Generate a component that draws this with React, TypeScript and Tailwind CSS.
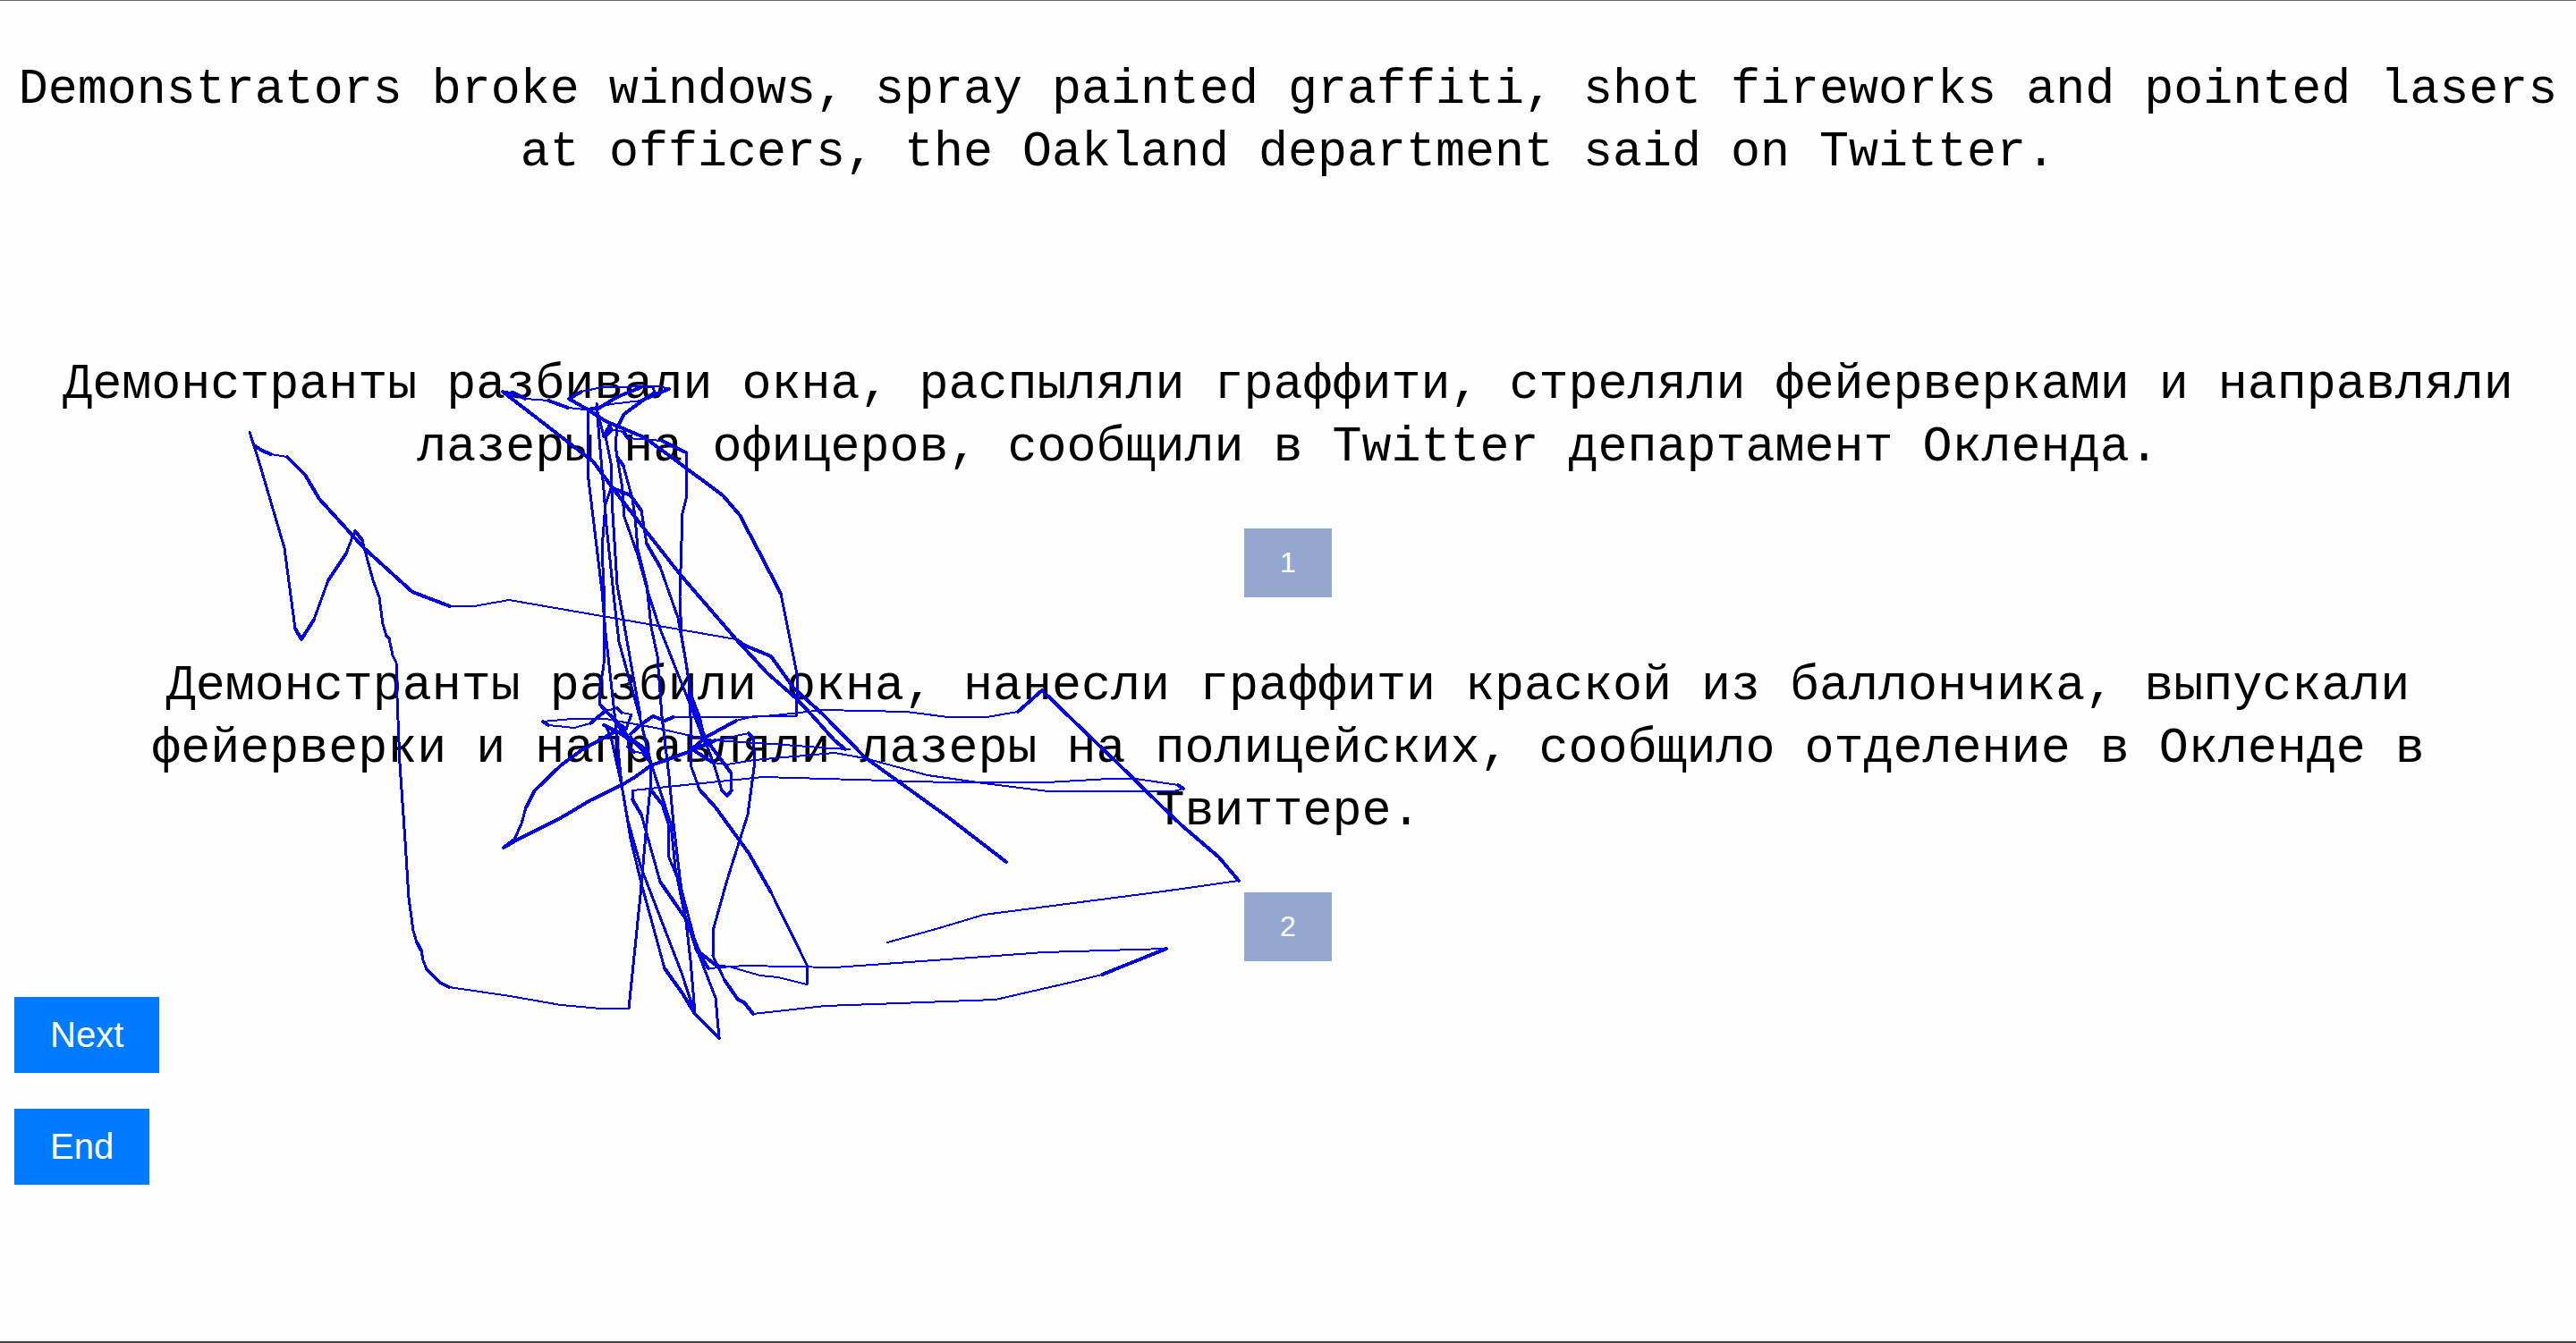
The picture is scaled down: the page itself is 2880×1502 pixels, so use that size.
const strokes: string[] = [
  // left loop and long diagonal
  "279,482 284,497 293,503 303,507 321,510 341,530 357,557 387,590 407,612 461,661 503,677 530,677 569,670 823,714 833,721 862,733 887,768 920,798 967,846 1003,872 1060,913 1125,963",
  "279,482 288,510 318,612 330,702 337,714 351,692 367,648 387,618 395,597 397,593 405,603 410,622 417,648 424,667 428,697 432,710 435,713 439,732 443,740 444,780 447,853 453,940 457,1003 462,1040 466,1053 471,1062 473,1073 477,1083 492,1098 502,1103 570,1113 627,1123 672,1127 703,1127 716,1000 723,920 727,880 727,853 722,837 702,823",
  // diagonal from the upper corner and its way back
  "562,437 663,515 685,545 720,590 760,641 823,714 858,752 890,780 907,798 933,827 945,837 950,837 930,836 863,831 797,827 777,823 733,813 677,803 640,803 607,806 613,810 642,813 660,808 677,794 690,791 695,796 706,798 700,814 694,810",
  // top loops and right arc
  "562,437 574,438 587,445 613,447 635,455 653,457 683,451 717,447 748,434 737,431 673,432 650,437 636,445 657,457 677,470 720,488 753,512 808,553 827,575 848,615 873,663 891,753 891,780 890,800 843,800 823,805 790,823 772,838",
  "562,437 572,442 580,441 572,438",
  "657,457 667,457 690,443 717,432 730,432 732,438 717,448 698,462 690,477 688,497 690,510 695,540 698,577 713,620 725,663 737,700 770,783 787,827",
  "690,510 697,520 707,557 710,577 713,613 723,653 728,700 735,733 740,800 748,867 753,920 760,980 767,1030 772,1073 777,1133",
  "685,545 705,553 717,570 723,607 738,633 758,690 767,740 773,777 782,800 788,827 798,853 807,883 813,889 818,883 817,863 790,827 775,790 762,710",
  "687,480 697,482 702,489 740,492 767,505 768,553 763,573 760,667 762,710 770,760 772,800 773,857 782,882 800,902 837,953 862,997 902,1078 902,1100 870,1092 850,1090 815,1080 800,1078 783,1065 767,1027 738,985 717,910 707,893 707,883 853,868 1060,874 1170,874 1240,870 1270,870 1317,877 1323,881 1313,884 1172,884 1100,875 1037,866 967,847 933,841 843,849 813,854 797,852 777,839",
  "775,838 728,855 710,868 695,877 660,894 630,912 575,940 563,947 575,938 583,920 588,902 598,883 627,855 650,838 677,823 688,817 677,811 683,823 695,877 702,917 717,970 762,1087 777,1133",
  "705,820 717,809 730,800 743,805 753,801 840,801 867,799 920,793 1013,795 1060,801 1103,801 1138,795 1165,771 1200,805 1250,853 1297,899 1320,921 1363,958 1385,984 1300,996 1100,1022 1050,1037 992,1053",
  "775,837 800,827 837,819 842,825 844,850 836,910 813,983 797,1040 797,1068 810,1095 825,1117 832,1120 842,1133 923,1124 1113,1117 1200,1097 1232,1089 1304,1060 1167,1064 1100,1069 933,1081 883,1080 833,1079 792,1082 778,1060 767,1027",
  "657,457 657,527 673,660 677,707 687,797 695,877 705,937 717,987 743,1082 763,1110 777,1133 804,1160 800,1115 780,1063 760,987 748,958 747,920 740,898 728,883 727,853",
  "667,450 670,490 675,547 678,587 687,673 692,717 715,800 728,853 750,920 755,970 767,1030",
  "668,460 675,487 680,478 681,475 684,480 677,487 683,517 685,573 690,653 707,750 716,800",
  "683,545 677,563 673,613 676,673 675,743 670,773 671,787 680,797 690,806 702,823 722,837 728,853",
  "675,810 690,817 710,830 723,842 728,855",
  "688,806 702,826 702,834 709,840 719,841 726,850",
];

type Segment = { x1: number; y1: number; x2: number; y2: number; strokeWidth: number };

// The pen is thin on nearly level runs, broader on steep ones and broadest on diagonals.
function penWidth(dx: number, dy: number) {
  if (dy < dx / 3) return 2;
  return dy < dx * 2 ? 4 : 3;
}

const segments: Segment[] = strokes.flatMap((stroke) => {
  const points = stroke.split(" ").map((pair) => pair.split(",").map(Number));
  return points.slice(1).map(([x2, y2], i) => {
    const [x1, y1] = points[i];
    return { x1, y1, x2, y2, strokeWidth: penWidth(Math.abs(x2 - x1), Math.abs(y2 - y1)) };
  });
});

const textClass =
  "text-center font-['Liberation_Mono',monospace] text-[55px] leading-[70px] text-black";

function Choice({ label }: { label: string }) {
  return (
    <button
      type="button"
      className="self-center bg-[#94a7d0] px-10 py-5 text-[32px] leading-[37px] text-white"
    >
      {label}
    </button>
  );
}

function Action({ label }: { label: string }) {
  return (
    <button
      type="button"
      className="self-start bg-[#007bff] px-10 py-5 text-[40px] leading-[45px] text-white"
    >
      {label}
    </button>
  );
}

function PointerTrail() {
  return (
    <svg
      viewBox="0 0 2880 1502"
      className="pointer-events-none absolute top-0 left-0 h-auto w-full"
      fill="none"
      stroke="#0000e6"
      strokeLinecap="round"
      shapeRendering="crispEdges"
      aria-hidden="true"
    >
      {segments.map((segment, i) => (
        <line key={i} {...segment} />
      ))}
    </svg>
  );
}

export default function App() {
  return (
    <main className="relative flex min-h-screen flex-col border-t border-b-2 border-t-[#666666] border-b-[#444444] bg-[#fefefe] px-4 pt-[65px] font-['Liberation_Sans',Arial,sans-serif]">
      <p className={textClass}>
        Demonstrators broke windows, spray painted graffiti, shot fireworks and pointed lasers at
        officers, the Oakland department said on Twitter.
      </p>
      <section className="mt-[190px] flex flex-col gap-[55px]">
        <p className={textClass}>
          Демонстранты разбивали окна, распыляли граффити, стреляли фейерверками и направляли
          лазеры на офицеров, сообщили в Twitter департамент Окленда.
        </p>
        <Choice label="1" />
      </section>
      <section className="mt-[65px] flex flex-col gap-[55px]">
        <p className={textClass}>
          Демонстранты разбили окна, нанесли граффити краской из баллончика, выпускали фейерверки и
          направляли лазеры на полицейских, сообщило отделение в Окленде в Твиттере.
        </p>
        <Choice label="2" />
      </section>
      <div className="mt-10 flex flex-col gap-10">
        <Action label="Next" />
        <Action label="End" />
      </div>
      <PointerTrail />
    </main>
  );
}
